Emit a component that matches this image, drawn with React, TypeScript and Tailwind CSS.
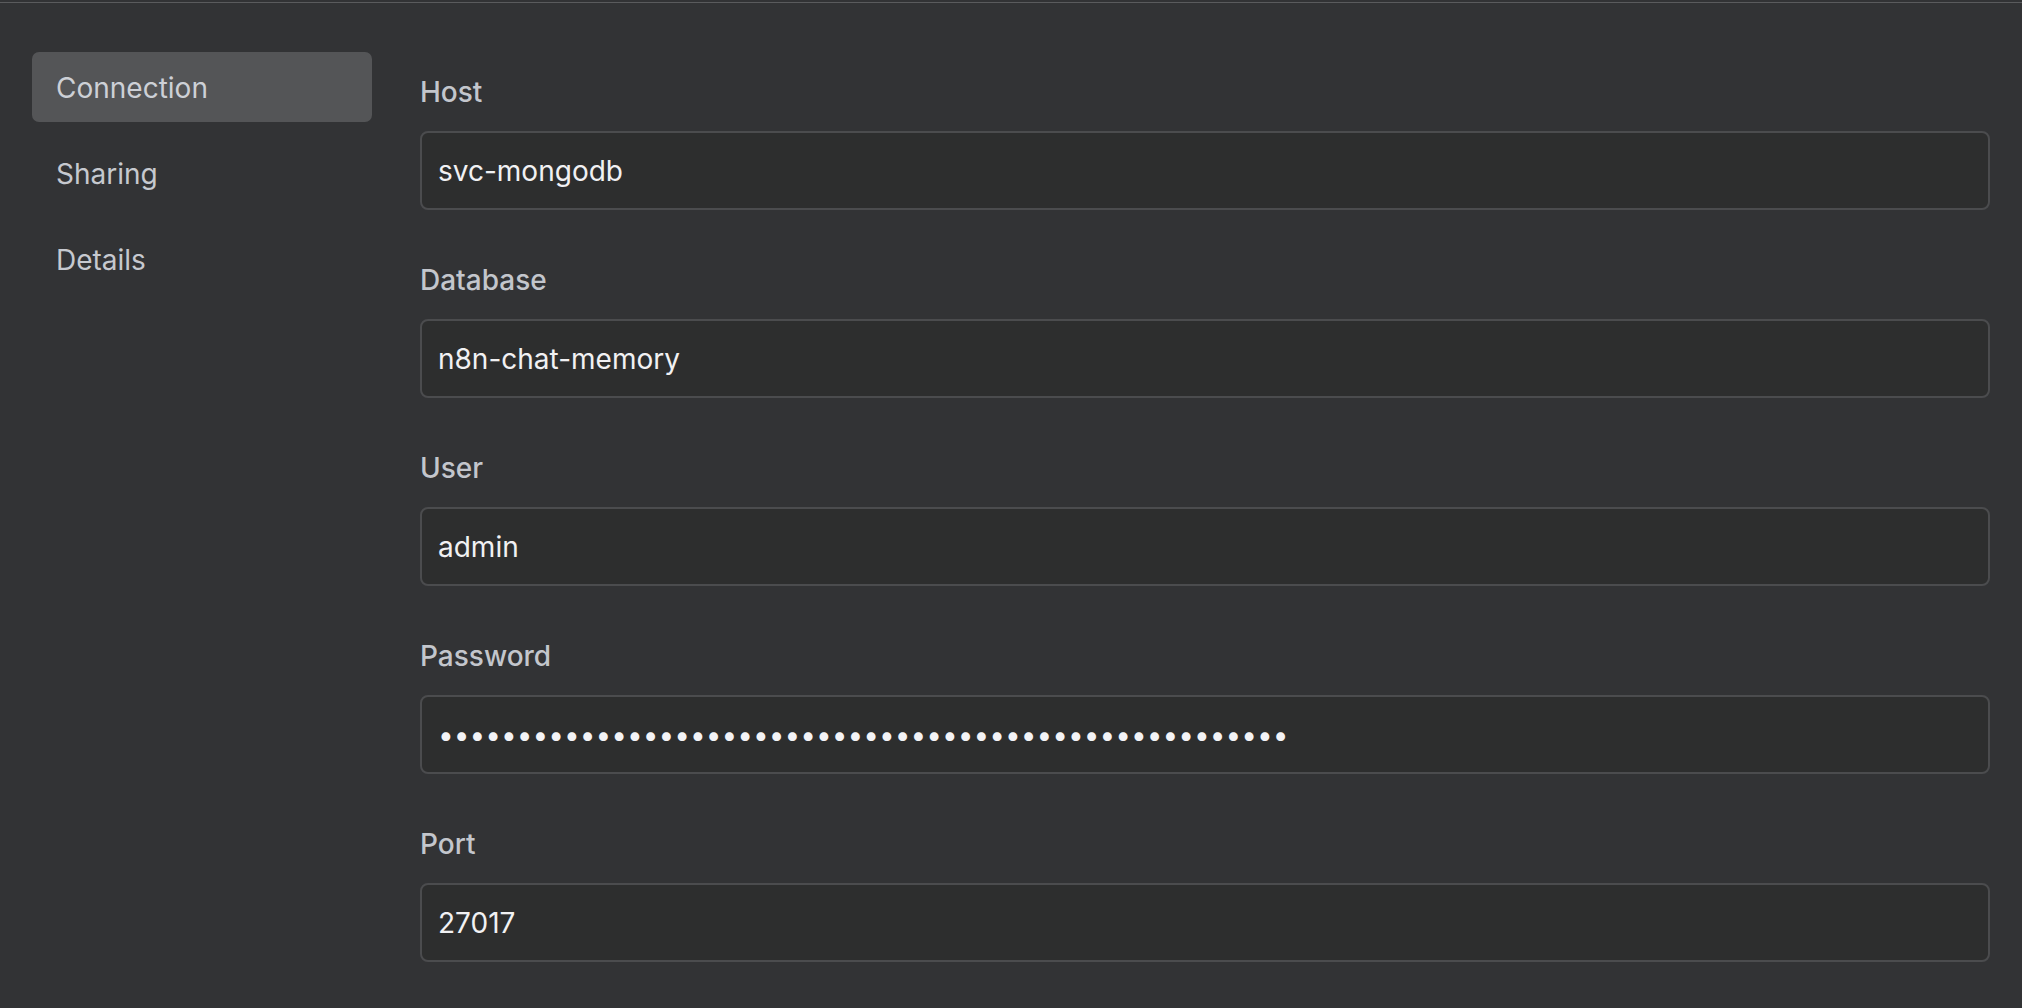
const fields = [
  { label: 'Host', value: 'svc-mongodb' },
  { label: 'Database', value: 'n8n-chat-memory' },
  { label: 'User', value: 'admin' },
  { label: 'Password', value: '•'.repeat(54), secret: true },
  { label: 'Port', value: '27017' },
];

const tabs = ['Connection', 'Sharing', 'Details'];

export default function App() {
  return (
    <div className="min-h-screen bg-[#323335] pt-[2px] font-['Inter',sans-serif]">
      <div className="flex border-t border-[#5a5b5d] px-[32px] pt-[49px]">
        <nav className="flex w-[340px] shrink-0 flex-col gap-[16px]">
          {tabs.map((tab, i) => (
            <div
              key={tab}
              className={
                i === 0
                  ? 'flex h-[70px] items-center rounded-[7px] bg-[#545557] px-[24px] pt-[2px] text-[28px] text-[#cdd0d6]'
                  : 'flex h-[70px] items-center rounded-[7px] px-[24px] pt-[2px] text-[28px] text-[#c6c9cf]'
              }
            >
              {tab}
            </div>
          ))}
        </nav>
        <div className="ml-[48px] flex flex-1 flex-col gap-[53px] pt-[23px]">
          {fields.map((f) => (
            <div key={f.label} className="flex flex-col gap-[21px]">
              <label className="text-[28px] leading-[35px] font-medium text-[#c3c6cc]">{f.label}</label>
              <div className="flex h-[79px] items-center rounded-[8px] border-2 border-[#4b4c4e] bg-[#2d2e2e] px-[16px]">
                <span className={f.secret ? 'text-[28px] text-[#f3f3f6]' : 'text-[28px] text-[#f1f1f3]'}>
                  {f.value}
                </span>
              </div>
            </div>
          ))}
        </div>
      </div>
    </div>
  );
}
